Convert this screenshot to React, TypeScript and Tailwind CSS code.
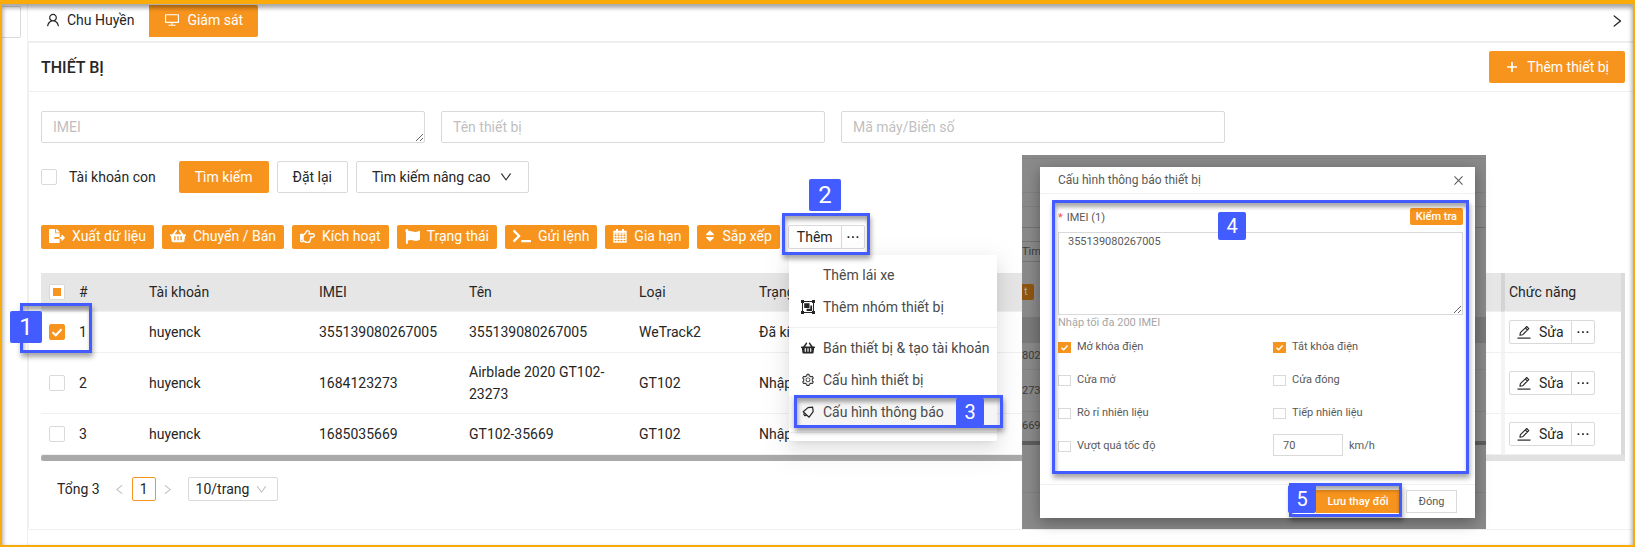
import { useEffect, useRef } from "react";
import type { ReactNode } from "react";
import clsx from "clsx";
import {
  AiOutlineUser,
  AiOutlineDesktop,
  AiOutlineRight,
  AiOutlineLeft,
  AiOutlineDown,
  AiOutlineSetting,
  AiOutlineClose,
} from "react-icons/ai";
import {
  FaFileExport,
  FaShoppingBasket,
  FaRegHandPointRight,
  FaFlag,
  FaTerminal,
  FaSort,
} from "react-icons/fa";

function CalendarGrid() {
  return (
    <svg width="14" height="14" viewBox="0 0 14 14" fill="none" stroke="currentColor" aria-hidden="true">
      <path d="M1 2.5h12V13H1z" strokeWidth="1.4" />
      <path d="M1 5h12M1 7.8h12M1 10.4h12M4 4v9M7 4v9M10 4v9" strokeWidth="1.1" />
      <path d="M4 0v3.5M10 0v3.5" strokeWidth="2" />
      <path d="M1 3h12" strokeWidth="1.6" />
    </svg>
  );
}

function BellTag() {
  return (
    <svg width="14" height="14" viewBox="0 0 14 14" fill="none" stroke="#262626" strokeWidth="1.2" strokeLinejoin="round" className="shrink-0" aria-hidden="true">
      <path d="M2.2 6.8 7 2.6l4.6-.4.6 4.4-4.1 5.6z" />
      <path d="M3.3 8c-.7.9-.5 1.7 0 2.2.6.5 1.4.6 2.2-.1" />
    </svg>
  );
}

function GroupIcon() {
  return (
    <svg width="14" height="14" viewBox="0 0 14 14" className="shrink-0" fill="#262626" aria-hidden="true">
      <path d="M1.5 1.5h11v11h-11z" fill="none" stroke="#262626" strokeWidth="1" />
      <path d="M0 0h3v3H0zM11 0h3v3h-3zM0 11h3v3H0zM11 11h3v3h-3z" />
      <path d="M3.2 3.2h5.3v4.8H3.2z" />
      <path d="M9.3 5.6h1.8v5.4H5.6V8.8h3.7z" />
    </svg>
  );
}

function EditIcon() {
  return (
    <svg width="14" height="14" viewBox="0 0 14 14" fill="none" stroke="currentColor" aria-hidden="true">
      <path d="M.5 13.1h13" strokeWidth="1.2" />
      <path d="M2.9 10.3l.5-2.6 6.3-6.2 2.1 2.1-6.2 6.2zM8.3 2.9l2.1 2.1" strokeWidth="1.1" strokeLinejoin="round" />
    </svg>
  );
}

function Dots() {
  return (
    <svg width="14" height="14" viewBox="0 0 14 14" fill="currentColor" aria-hidden="true">
      <path d="M1.6 6.2h1.7v1.7H1.6zM6.1 6.2h1.7v1.7H6.1zM10.6 6.2h1.7v1.7h-1.7z" />
    </svg>
  );
}

function PlusIcon() {
  return (
    <svg width="14" height="14" viewBox="0 0 14 14" fill="none" stroke="currentColor" strokeWidth="1.7" aria-hidden="true">
      <path d="M7 2v10M2 7h10" />
    </svg>
  );
}

function Check({
  checked = false,
  partial = false,
  small = false,
  label,
  id,
}: {
  checked?: boolean;
  partial?: boolean;
  small?: boolean;
  label?: string;
  id?: string;
}) {
  const ref = useRef<HTMLInputElement>(null);
  useEffect(() => {
    if (ref.current) ref.current.indeterminate = partial;
  }, [partial]);
  return (
    <span className={clsx("relative block shrink-0", small ? "h-[11px] w-[13px]" : "size-4")}>
      <input
        ref={ref}
        id={id}
        type="checkbox"
        defaultChecked={checked}
        aria-label={label}
        className={clsx(
          "peer block size-full appearance-none border border-[#d9d9d9] bg-white checked:border-[#f7941d] checked:bg-[#f7941d]",
          !small && "rounded-xs",
        )}
      />
      <svg
        viewBox="0 0 16 16"
        className="pointer-events-none absolute inset-0 size-full fill-none stroke-white stroke-2 opacity-0 peer-checked:opacity-100"
        aria-hidden="true"
      >
        <path d="M3.5 8.2 6.8 11.3 12.5 5.2" />
      </svg>
      {partial && <span className="pointer-events-none absolute inset-1 bg-[#f7941d]" />}
    </span>
  );
}

function Marker({ className, children }: { className: string; children: ReactNode }) {
  return (
    <span
      className={clsx(
        "pointer-events-none absolute flex items-center justify-center rounded-xs bg-[#425cff] text-white",
        className,
      )}
    >
      {children}
    </span>
  );
}

function Outline({ className }: { className: string }) {
  return (
    <span
      className={clsx(
        "pointer-events-none absolute border-3 border-[#425cff] shadow-[1px_4px_5px_rgba(0,0,0,0.35),inset_1px_4px_4px_rgba(0,0,0,0.35)]",
        className,
      )}
    />
  );
}

const tools = [
  { text: "Xuất dữ liệu", icon: <FaFileExport size={16} /> },
  { text: "Chuyển / Bán", icon: <FaShoppingBasket size={16} /> },
  { text: "Kích hoạt", icon: <FaRegHandPointRight size={15} /> },
  { text: "Trạng thái", icon: <FaFlag size={15} /> },
  { text: "Gửi lệnh", icon: <FaTerminal size={18} /> },
  { text: "Gia hạn", icon: <CalendarGrid /> },
  { text: "Sắp xếp", icon: <FaSort size={14} className="w-[10px]" /> },
];

const rows = [
  { n: 1, imei: "355139080267005", name: "355139080267005", type: "WeTrack2", status: "Đã kích hoạt", on: true },
  { n: 2, imei: "1684123273", name: "Airblade 2020 GT102-23273", type: "GT102", status: "Nhập kho", on: false },
  { n: 3, imei: "1685035669", name: "GT102-35669", type: "GT102", status: "Nhập kho", on: false },
];

const whiteBtn = "flex items-center justify-center border border-[#d9d9d9] bg-white";
const field = "block h-8 w-full rounded-xs border border-[#d9d9d9] bg-white px-[11px] py-1 leading-[22px] placeholder:text-[#bfbfbf]";

function Toolbar() {
  return (
    <div className="flex gap-2 pt-8">
      {tools.map((t) => (
        <button key={t.text} type="button" className="flex h-6 items-center gap-[7px] rounded-xs bg-[#f7941d] px-2 pb-0.5 text-white">
          <span className="flex h-4 items-center">{t.icon}</span>
          <span>{t.text}</span>
        </button>
      ))}
      <div className="flex">
        <button type="button" className={clsx(whiteBtn, "h-6 rounded-l-xs px-2 pb-px")}>Thêm</button>
        <button type="button" aria-label="Mở menu" className={clsx(whiteBtn, "-ml-px h-6 w-6 rounded-r-xs")}>
          <Dots />
        </button>
      </div>
    </div>
  );
}

function DeviceTable() {
  return (
    <div className="pt-6">
      <div className="flex">
        <table className="min-w-0 flex-1 table-fixed border-separate border-spacing-0 text-left">
          <colgroup>
            <col className="w-[30px]" />
            <col className="w-[70px]" />
            <col className="w-[170px]" />
            <col className="w-[150px]" />
            <col className="w-[170px]" />
            <col className="w-[120px]" />
            <col />
            <col className="w-[120px]" />
          </colgroup>
          <thead>
            <tr className="h-[39px] bg-[#e6e6e6] *:border-b *:border-b-[#f0f0f0] *:font-normal">
              <th className="pl-2"><Check partial label="Chọn tất cả" /></th>
              <th className="px-2">#</th>
              <th className="px-2">Tài khoản</th>
              <th className="px-2">IMEI</th>
              <th className="px-2">Tên</th>
              <th className="px-2">Loại</th>
              <th className="px-2">Trạng thái</th>
              <th className="border-l-4 border-l-[#d4d4d4] px-1">Chức năng</th>
            </tr>
          </thead>
          <tbody>
            {rows.map((r) => (
              <tr key={r.n} className="*:border-b *:border-b-[#f0f0f0]">
                <td className="pl-2"><Check checked={r.on} label={`Chọn ${r.imei}`} /></td>
                <td className="px-2">{r.n}</td>
                <td className="px-2">huyenck</td>
                <td className="px-2">{r.imei}</td>
                <td className="px-2 py-2">{r.name}</td>
                <td className="px-2">{r.type}</td>
                <td className="px-2">{r.status}</td>
                <td className="border-l-4 border-l-[#f4f4f4] px-1 py-2">
                  <div className="flex">
                    <button type="button" className={clsx(whiteBtn, "h-6 gap-2 rounded-l-xs px-[7px]")}>
                      <EditIcon />
                      Sửa
                    </button>
                    <button type="button" aria-label="Thao tác khác" className={clsx(whiteBtn, "-ml-px h-6 w-6 rounded-r-xs")}>
                      <Dots />
                    </button>
                  </div>
                </td>
              </tr>
            ))}
          </tbody>
        </table>
        <div className="w-1 bg-[#dadada]" />
      </div>
      <div className="h-1.5 bg-[#e1e1e1]">
        <div className="h-full w-4/5 rounded-l-full bg-[#a9a9a9]" />
      </div>
    </div>
  );
}

function Pagination() {
  return (
    <nav className="flex items-center px-4 pt-4 pb-7" aria-label="Phân trang">
      <span className="mr-3">Tổng 3</span>
      <button type="button" aria-label="Trang trước" className="flex w-4 items-center justify-center text-[#bfbfbf]">
        <AiOutlineLeft size={13} />
      </button>
      <button type="button" className="ml-1 flex h-6 w-6 items-center justify-center rounded-xs border border-[#f7941d]">1</button>
      <button type="button" aria-label="Trang sau" className="ml-1 flex w-4 items-center justify-center text-[#bfbfbf]">
        <AiOutlineRight size={13} />
      </button>
      <div className="relative ml-3">
        <select aria-label="Số dòng mỗi trang" className="block h-6 w-[90px] appearance-none rounded-xs border border-[#d9d9d9] bg-white pl-[7px]">
          <option>10/trang</option>
        </select>
        <AiOutlineDown size={13} className="pointer-events-none absolute top-1.5 right-2.5 text-[#bfbfbf]" />
      </div>
    </nav>
  );
}

const menuItem = "flex h-8 w-full items-center gap-2 pl-3 pr-2 text-left whitespace-nowrap";

function MoreMenu() {
  return (
    <div className="absolute top-[251px] left-[787px] w-52 rounded-xs bg-white py-1 text-[#4a4a4a] shadow-[0_3px_6px_-4px_rgba(0,0,0,0.12),0_6px_16px_0_rgba(0,0,0,0.08),0_9px_28px_8px_rgba(0,0,0,0.05)]">
      <button type="button" className={menuItem}><span className="w-3.5" />Thêm lái xe</button>
      <button type="button" className={menuItem}><GroupIcon />Thêm nhóm thiết bị</button>
      <hr className="my-1 border-[#f0f0f0]" />
      <button type="button" className={menuItem}><FaShoppingBasket size={14} className="shrink-0 text-[#262626]" />Bán thiết bị &amp; tạo tài khoản</button>
      <button type="button" className={menuItem}><AiOutlineSetting size={14} className="shrink-0 text-[#262626]" />Cấu hình thiết bị</button>
      <button type="button" className={clsx(menuItem, "bg-[#f5f5f5]")}><BellTag />Cấu hình thông báo</button>
      <hr className="my-1 border-[#f0f0f0]" />
    </div>
  );
}

const options = [
  { text: "Mở khóa điện", on: true },
  { text: "Tắt khóa điện", on: true },
  { text: "Cửa mở", on: false },
  { text: "Cửa đóng", on: false },
  { text: "Rò rỉ nhiên liệu", on: false },
  { text: "Tiếp nhiên liệu", on: false },
  { text: "Vượt quá tốc độ", on: false },
];

function DimmedPage() {
  return (
    <div className="absolute inset-0 overflow-hidden text-[#3c3c3c]" aria-hidden="true">
      <div className="h-1 border-b border-[#828282]" />
      <div className="h-[34px] border-b border-[#828282]" />
      <div className="h-3.5 border-b border-[#7f7f7f]" />
      <div className="h-[21px] border-b border-[#747474]" />
      <div className="h-[13px]" />
      <div className="h-[21px] w-10 border-y border-[#747474] leading-5">Tìm</div>
      <div className="mt-[22px] h-4 w-3 rounded-r-xs bg-[#8f5510] pl-0.5 leading-4 text-[#aaa]">t</div>
      <div className="mt-[17px] h-[26px] bg-[#7a7a7a]" />
      <div className="h-[27px] border-b border-[#828282] leading-[26px]">802</div>
      <div className="h-[42px] border-b border-[#828282] leading-[42px]">273</div>
      <div className="h-[29px] leading-7">669</div>
      <div className="h-1 bg-[#5e5e5e]" />
      <div className="h-12 border-b border-[#828282]" />
    </div>
  );
}

function NotifyDialog() {
  return (
    <div className="absolute top-[151px] left-[1020px] w-[464px] bg-[#8a8a8a] pt-3 pr-[11px] pb-[11px] pl-[18px] text-[11px] leading-4 text-[#595959]">
      <DimmedPage />
      <div role="dialog" aria-label="Cấu hình thông báo thiết bị" className="relative bg-white shadow-[0_4px_14px_rgba(0,0,0,0.35)]">
        <div className="flex h-[27px] items-center justify-between border-b border-[#f0f0f0] pr-2.5 pl-[18px] text-xs">
          <h2>Cấu hình thông báo thiết bị</h2>
          <button type="button" aria-label="Đóng hộp thoại"><AiOutlineClose size={13} /></button>
        </div>
        <div className="pt-3.5 pr-3 pl-[18px]">
          <div className="flex h-6 items-start justify-between">
            <label htmlFor="dlg-imei" className="pt-0.5">
              <span className="mr-1 text-[#ff4d4f]">*</span>IMEI (1)
            </label>
            <button type="button" className="h-[17px] rounded-xs bg-[#f7941d] px-1.5 font-medium text-white">Kiểm tra</button>
          </div>
          <textarea id="dlg-imei" defaultValue="355139080267005" className="block h-[83px] w-full border border-[#d9d9d9] px-[9px] py-px" />
          <p className="h-6 text-[#a6a6a6]">Nhập tối đa 200 IMEI</p>
          <div className="grid grid-cols-[215px_1fr]">
            {options.map((o, i) => (
              <div key={o.text} className="flex h-[33px] gap-1.5">
                <span className="flex h-4 items-center"><Check small checked={o.on} id={`opt-${i}`} /></span>
                <label htmlFor={`opt-${i}`}>{o.text}</label>
              </div>
            ))}
            <div className="flex items-start gap-1.5">
              <input id="speed" defaultValue="70" className="-mt-1 h-[22px] w-[70px] border border-[#d9d9d9] px-[9px]" />
              <label htmlFor="speed">km/h</label>
            </div>
          </div>
        </div>
        <div className="mt-[13px] flex h-[34px] items-center justify-end gap-1.5 border-t border-[#f0f0f0] pr-[18px]">
          <button type="button" className="h-[23px] w-[84px] bg-[#f7941d] font-medium text-white">Lưu thay đổi</button>
          <button type="button" className={clsx(whiteBtn, "h-[23px] w-[51px]")}>Đóng</button>
        </div>
      </div>
    </div>
  );
}

export default function App() {
  return (
    <div className="relative flex min-h-screen border-2 border-t-4 border-[#faab0a] bg-white font-['Roboto','Noto_Sans',sans-serif] text-sm leading-[22px] text-[#262626]">
      <aside className="w-[25px] shrink-0 pt-0.5">
        <button type="button" aria-label="Thu gọn" className="block h-8 w-[19px] rounded-r-xs border border-l-0 border-[#d9d9d9]" />
      </aside>

      <main className="min-w-0 flex-1 border-l border-[#f0f0f0]">
        <header className="flex h-[38px] items-start justify-between border-b border-[#ececec] pt-px pr-2">
          <div className="flex">
            <a href="#account" className="flex h-8 items-center gap-1.5 pr-[15px] pb-0.5 pl-[17px]">
              <AiOutlineUser size={16} />
              Chu Huyền
            </a>
            <a href="#monitor" className="flex h-8 items-center gap-[7px] rounded-r-xs bg-[#f7941d] px-[15px] pb-0.5 text-white">
              <AiOutlineDesktop size={16} />
              Giám sát
            </a>
          </div>
          <button type="button" aria-label="Tiếp" className="flex h-8 items-center"><AiOutlineRight size={16} /></button>
        </header>

        <section className="rounded-bl-xs border-t border-b border-l border-[#f0f0f0]">
          <div className="flex h-[49px] items-center justify-between border-b border-[#f0f0f0] pr-2 pl-3">
            <h1 className="pt-0.5 text-base font-medium">THIẾT BỊ</h1>
            <button type="button" className="flex h-8 items-center gap-2 rounded-xs bg-[#f7941d] px-4 text-white">
              <PlusIcon />
              Thêm thiết bị
            </button>
          </div>

          <div className="pt-[19px] pr-2 pl-3">
            <form>
              <div className="grid grid-cols-4 gap-4">
                <textarea aria-label="IMEI" placeholder="IMEI" rows={1} className={field} />
                <input aria-label="Tên thiết bị" placeholder="Tên thiết bị" className={field} />
                <input aria-label="Mã máy/Biển số" placeholder="Mã máy/Biển số" className={field} />
              </div>
              <div className="flex items-center gap-2 pt-[18px]">
                <div className="mr-[15px] flex items-center gap-3">
                  <Check id="sub" />
                  <label htmlFor="sub">Tài khoản con</label>
                </div>
                <button type="button" className="h-8 rounded-xs bg-[#f7941d] px-4 text-white">Tìm kiếm</button>
                <button type="button" className={clsx(whiteBtn, "h-8 rounded-xs px-[15px]")}>Đặt lại</button>
                <button type="button" className={clsx(whiteBtn, "h-8 gap-2 rounded-xs px-[15px]")}>
                  Tìm kiếm nâng cao
                  <AiOutlineDown size={14} />
                </button>
              </div>
            </form>
            <Toolbar />
            <DeviceTable />
            <Pagination />
          </div>
        </section>
      </main>

      <MoreMenu />
      <NotifyDialog />

      <Outline className="top-[299px] left-[18px] h-[50px] w-[72px]" />
      <Marker className="top-[307px] left-2 size-8 text-2xl">1</Marker>
      <Outline className="top-[209px] left-[780px] h-[42px] w-[88px]" />
      <Marker className="top-[175px] left-[807px] size-8 text-2xl">2</Marker>
      <Outline className="top-[391px] left-[792px] h-[33px] w-[209px]" />
      <Marker className="top-[394px] left-[954px] size-7 text-xl">3</Marker>
      <Outline className="top-[196px] left-[1050px] h-[274px] w-[417px]" />
      <Marker className="top-[208px] left-[1216px] size-7 text-xl">4</Marker>
      <Outline className="top-[479px] left-[1287px] h-[34px] w-[113px]" />
      <Marker className="top-[481px] left-[1286px] size-7 text-xl">5</Marker>

      <div className="pointer-events-none absolute inset-0 shadow-[inset_0_3px_4px_1px_rgba(0,0,0,0.35)]" />
    </div>
  );
}
